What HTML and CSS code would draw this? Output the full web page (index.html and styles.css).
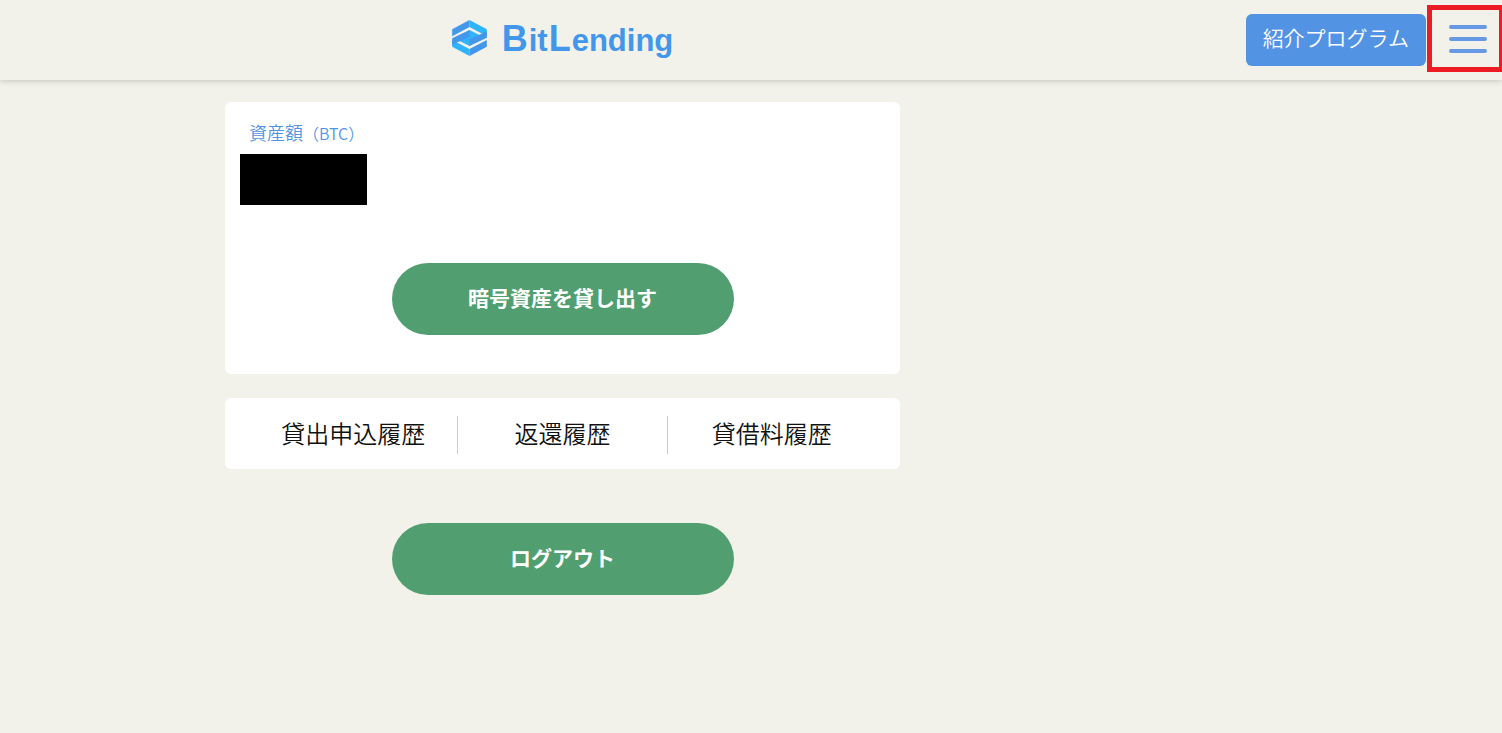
FILE: index.html
```html
<!DOCTYPE html>
<html lang="ja">
<head>
    <meta charset="UTF-8">
    <meta name="viewport" content="width=device-width, initial-scale=1.0">
    <title>BitLending</title>
    <link rel="stylesheet" href="styles.css">
</head>
<body>

    <header class="header">
        <div class="header-main">
            <a href="#" class="logo">
                <svg class="logo-mark" viewBox="0 0 104 108" aria-hidden="true">
                    <path fill="#2fb4fb" d="M52 0 L104 28 V49 L52 21 Z"/>
                    <path fill="#4297ea" d="M52 0 L0 28 V49 L52 21 Z"/>
                    <path fill="#2fb4fb" d="M0 60 L52 87 V108 L0 80 Z"/>
                    <path fill="#4297ea" d="M104 60 L52 87 V108 L104 80 Z"/>
                    <path fill="#2fb4fb" d="M52 30 L92 50 L52 78 L12 58 Z"/>
                    <path fill="#4297ea" d="M52 30 L0 55 V74 L52 50 Z"/>
                    <path fill="#4297ea" d="M104 34 V53 L52 78 V58 Z"/>
                </svg>
                <span class="logo-text"><span class="logo-cap">B</span>it<span class="logo-cap">L</span>ending</span>
            </a>
        </div>
        <div class="header-side">
            <a href="#" class="program-link">紹介プログラム</a>
            <button type="button" class="menu-button" aria-label="メニュー">
                <span class="menu-line"></span>
                <span class="menu-line"></span>
                <span class="menu-line"></span>
            </button>
        </div>
    </header>

    <main class="content">
        <section class="card asset-card">
            <h1 class="asset-label">資産額<span class="asset-unit">（BTC）</span></h1>
            <div class="asset-mask"></div>
            <button type="button" class="button">暗号資産を貸し出す</button>
        </section>

        <nav class="card history">
            <a href="#" class="history-link">貸出申込履歴</a>
            <a href="#" class="history-link">返還履歴</a>
            <a href="#" class="history-link">貸借料履歴</a>
        </nav>

        <button type="button" class="button logout">ログアウト</button>
    </main>

</body>
</html>
```

FILE: styles.css
```css
* {
    box-sizing: border-box;
}

body {
    margin: 0;
    background-color: #f3f2ea;
    color: #111;
    font-family: "Noto Sans CJK JP", sans-serif;
    font-weight: 350;
}

a {
    color: inherit;
    text-decoration: none;
}

button {
    border: none;
    font-family: inherit;
    cursor: pointer;
}

/* header */
.header {
    display: flex;
    height: 80px;
    box-shadow: 0 1px 6px rgba(0, 0, 0, 0.2);
}

.header-main {
    flex: 1;
    display: flex;
    justify-content: center;
    align-items: center;
    padding-bottom: 4px;
}

.header-side {
    width: 377px;
    display: flex;
    justify-content: flex-end;
    align-items: center;
    gap: 1px;
}

.logo {
    display: flex;
    align-items: center;
    gap: 14px;
}

.logo-mark {
    width: 35px;
    height: 36px;
}

.logo-text {
    padding-top: 4px;
    color: #4297ea;
    font-family: "Liberation Sans", Arial, sans-serif;
    font-size: 31px;
    font-weight: 700;
    line-height: 36px;
}

.logo-cap {
    padding: 0 1px;
    font-size: 36px;
}

.program-link {
    height: 52px;
    padding: 0 17px;
    border-radius: 6px;
    background-color: #5393e4;
    color: #fff;
    font-size: 21px;
    line-height: 46px;
}

.menu-button {
    display: flex;
    flex-direction: column;
    justify-content: center;
    align-items: center;
    gap: 8px;
    width: 75px;
    height: 67px;
    margin-bottom: 3px;
    padding: 0 0 0 5px;
    border: 5px solid #ed1c24;
    border-right-width: 3px;
    background: none;
}

.menu-line {
    width: 38px;
    height: 4px;
    border-radius: 2px;
    background-color: #6699e4;
}

/* content */
.content {
    display: flex;
    flex-direction: column;
    align-items: center;
    margin-right: 377px;
    padding: 22px 24px;
}

.card {
    width: 100%;
    max-width: 675px;
    border-radius: 6px;
    background-color: #fff;
}

.asset-card {
    display: flex;
    flex-direction: column;
    padding: 17px 15px 39px;
}

.asset-label {
    margin: 0 0 8px;
    padding-left: 9px;
    color: #5393e4;
    font-size: 18px;
    font-weight: 350;
    line-height: 26px;
}

.asset-unit {
    font-size: 16px;
}

.asset-mask {
    width: 127px;
    height: 51px;
    margin-bottom: 58px;
    background-color: #000;
}

.button {
    align-self: center;
    width: 342px;
    height: 72px;
    padding: 0 0 4px;
    border-radius: 36px;
    background-color: #519f71;
    color: #fff;
    font-size: 21px;
    font-weight: 700;
}

.history {
    display: flex;
    margin-top: 24px;
    padding: 18px 24px 15px;
}

.history-link {
    flex: 1;
    padding-bottom: 4px;
    font-size: 24px;
    line-height: 34px;
    text-align: center;
}

.history-link + .history-link {
    border-left: 1px solid #ccc;
}

.logout {
    margin-top: 54px;
}
```
